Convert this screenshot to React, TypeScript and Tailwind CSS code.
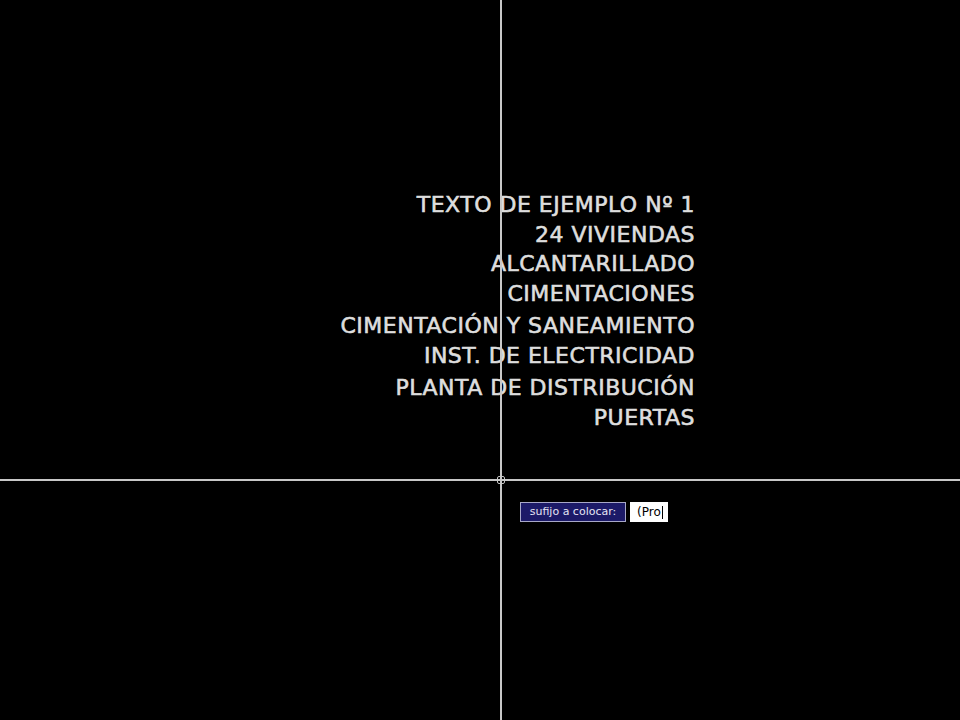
import React from 'react';

const LINES = [
  { text: "TEXTO DE EJEMPLO Nº 1", gap: false },
  { text: "24 VIVIENDAS", gap: false },
  { text: "ALCANTARILLADO", gap: false },
  { text: "CIMENTACIONES", gap: false },
  { text: "CIMENTACIÓN Y SANEAMIENTO", gap: true },
  { text: "INST. DE ELECTRICIDAD", gap: false },
  { text: "PLANTA DE DISTRIBUCIÓN", gap: true },
  { text: "PUERTAS", gap: false },
];

export default function App() {
  return (
    <div className="relative w-[960px] h-[720px] bg-black overflow-hidden">
      {/* drawing text */}
      <div className="flex flex-col items-end pt-[190px] pr-[265px] text-[#dedede] font-['DejaVu_Sans',sans-serif] text-[22px] tracking-[0.5px] leading-[29.5px] [-webkit-text-stroke:0.6px_#dedede]">
        {LINES.map((l, i) => (
          <div key={i} className={l.gap ? "mt-[3px]" : ""}>{l.text}</div>
        ))}
      </div>

      {/* crosshair */}
      <div className="absolute left-[500px] top-0 w-[2px] h-[720px] bg-[#c8c8c8]" />
      <div className="absolute left-0 top-[479px] w-[960px] h-[2px] bg-[#c8c8c8]" />
      <div className="absolute left-[497px] top-[476px] w-[8px] h-[8px] border border-[#c8c8c8] rounded-[2px]" />

      {/* dynamic input tooltip */}
      <div className="absolute left-[520px] top-[502px] flex items-center gap-[4px] font-['DejaVu_Sans',sans-serif] text-[11px]">
        <div className="h-[20px] w-[106px] flex items-center justify-center bg-[#1c1a68] border border-[#a8a8c8] text-[#e4e4f4]">
          sufijo a colocar:
        </div>
        <div className="h-[20px] w-[38px] pl-[7px] flex items-center bg-white text-black text-[12px]">
          (Pro<span className="inline-block w-[1px] h-[13px] bg-black ml-[1px]" />
        </div>
      </div>
    </div>
  );
}
